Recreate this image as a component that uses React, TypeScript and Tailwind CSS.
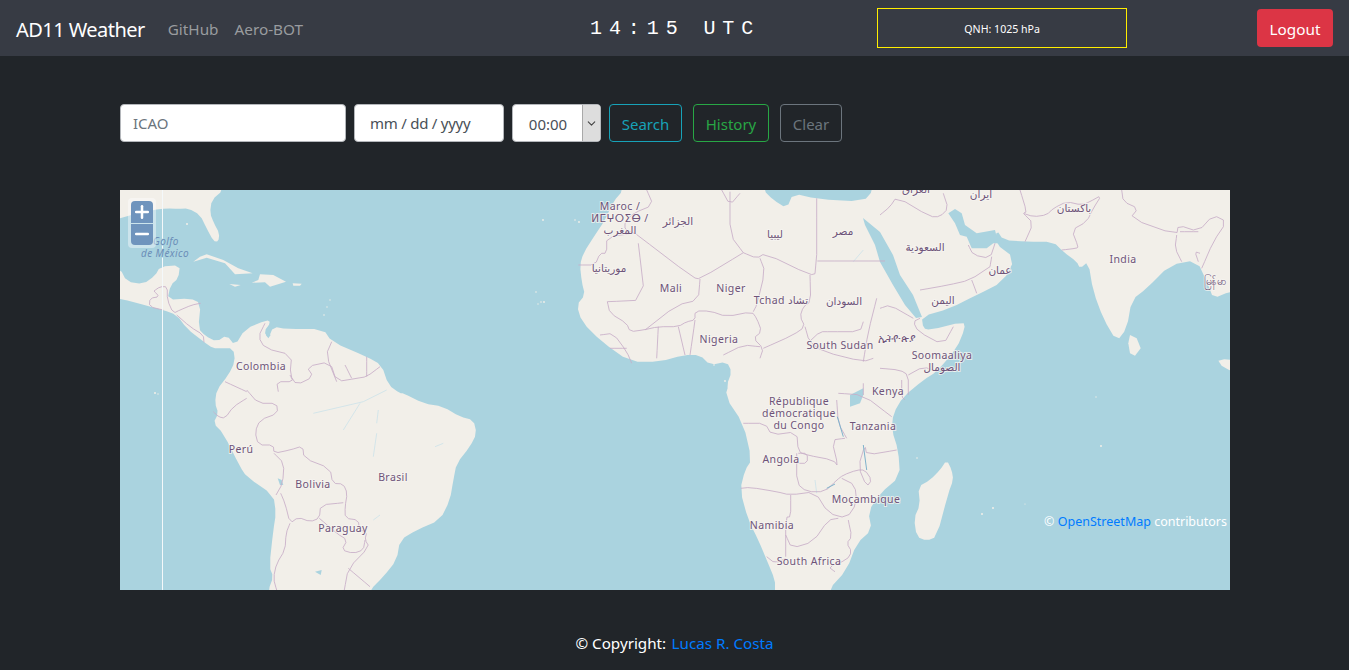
import { ChevronDown, Plus, Minus } from "lucide-react";

const Z = (ox: number, oy: number, s: string) =>
  s.trim().split(/\s+/).map((p) => {
    const [x, y] = p.split(",").map(Number);
    return `${(ox + x / 3).toFixed(1)},${(oy + y / 3).toFixed(1)}`;
  }).join(" ");
const z4 = (s: string) => Z(110, 185, s);
const z5 = (s: string) => Z(110, 390, s);
const z6 = (s: string) => Z(530, 185, s);
const z7 = (s: string) => Z(880, 185, s);
const z8 = (s: string) => Z(700, 380, s);

// rounds the corners of a hand-traced outline so coasts and borders read as curves
const smooth = (s: string, closed: boolean) => {
  const p = s.trim().split(/\s+/).map((q) => q.split(",").map(Number));
  const out: string[] = [];
  if (!closed) out.push(p[0].join(","));
  const n = p.length;
  for (let i = 0; i < (closed ? n : n - 1); i++) {
    const a = p[i];
    const b = p[(i + 1) % n];
    out.push(`${(a[0] * 0.75 + b[0] * 0.25).toFixed(1)},${(a[1] * 0.75 + b[1] * 0.25).toFixed(1)}`);
    out.push(`${(a[0] * 0.25 + b[0] * 0.75).toFixed(1)},${(a[1] * 0.25 + b[1] * 0.75).toFixed(1)}`);
  }
  if (!closed) out.push(p[n - 1].join(","));
  return out.join(" ");
};

const continents = [
  z4("-60,-60 340,-60 340,15 305,45 300,85 312,115 328,145 325,170 310,168 290,130 270,90 235,70 205,72 170,70 130,75 60,90 -60,130"),
  z4("-60,235 30,250 50,290 100,297 135,272 150,245 210,240 205,280 182,300 172,345 240,340 272,355 265,430 285,452 320,470 350,450 375,482 405,432 470,405 482,412 462,440 475,460 490,425 530,432 640,432 665,470 770,515 815,540 835,600 870,625") + " " +
    z5("880,10 940,40 1000,50 1050,80 1090,90 1100,130 1080,170 1040,220 1030,270 1020,330 990,390 920,420 870,450 860,510 820,560 780,600 740,690 475,690 475,600 490,560 478,530 490,420 498,370 490,315 410,260 390,230 340,130 310,100 325,70 315,40 320,0") + " " +
    z4("355,570 375,530 370,490 330,490 310,490 280,470 230,430 200,390 160,375 120,365 30,340 -60,330"),
  z6("280,-60 700,-60 700,15 730,45 770,70 790,25 860,42 1000,50 1030,15 1030,-60") + " " +
    z7("1150,-60 1150,300 1050,320 1000,340 985,300 950,225 870,240 800,310 755,345 740,430 710,470 670,400 640,320 625,230 600,250 590,230 550,200 520,170 440,170 370,165 350,135 345,175 405,220 370,290 290,330 210,370 125,395 130,430 150,435 250,410 255,430 230,490 170,560") + " " +
    z8("670,0 610,50 580,100 575,150 595,210 600,290 540,340 505,395 515,450 470,490 440,570 385,630 385,700 225,700 225,630 225,600 200,540 175,480 145,420 120,330 135,270 155,240 130,130 75,50 90,0") + " " +
    z6("600,630 590,600 605,560 590,530 540,540 510,510 460,510 390,530 300,530 215,470 155,410 140,360 165,330 155,290 150,240 160,205 195,150 225,105 250,50 280,15"),
  z8("740,240 755,270 760,300 745,340 710,470 680,482 650,470 642,415 660,375 655,320 690,300 720,270"),
  z7("1010,520 1100,530 1100,570 1030,550"),
].map((s) => smooth(s, true));

const smallLand = [
  z4("250,230 270,215 290,208 340,225 385,250 428,265 375,268 345,235 290,218"),
  z4("425,293 445,285 450,268 490,270 528,290 480,305 465,292"),
  z4("358,297 392,300 375,305"),
  z4("548,295 575,296 570,302 550,302"),
  z7("750,450 770,460 782,490 765,512 750,505 745,475"),
];

const water = [
  "863,218 880,232 893,255 900,275 913,295 922,317 916,318 905,305 893,285 880,262 875,245 865,225",
  z7("205,85 225,72 245,85 255,120 290,145 345,135 355,175 340,175 320,190 275,190 260,155 240,150 225,115"),
  z8("450,45 490,25 490,45 480,70 450,80"),
  z4("470,440 482,450 475,460 468,450"),
  z5("503,265 515,270 520,285 510,285"),
  z5("615,545 635,540 632,555"),
];

const islands: [number, number, number][] = [
  [187, 224, 1], [324, 315, 0.8], [327, 307, 0.7], [330, 300, 0.7], [544, 302, 0.9], [538, 304, 0.7], [543, 220, 0.9], [579, 222, 0.9], [575, 220, 0.8],
  [536, 292, 0.8], [541, 302, 0.8], [982, 514, 1], [993, 508, 1], [1025, 504, 0.6], [917, 458, 0.8], [1096, 397, 0.7], [1101, 446, 1],
  [155, 393, 1], [158, 394, 0.7], [725, 381, 0.9], [714, 365, 0.8],
];

const borders = [
  ...[
    "132,318 148,335 120,340 118,365 160,375", "132,318 150,305 172,305 172,345 190,385 210,375 245,360 272,355",
    "200,390 240,425 280,450 282,472", "465,415 445,455 465,490 545,510 540,570 560,600 610,575 590,545 660,530 680,590 740,580 770,575 810,545",
    "665,470 648,510 680,590", "705,540 725,580", "770,515 770,575", "345,590 410,620", "540,570 550,590 500,590 505,620",
  ].map(z4),
  ...[
    "410,0 445,40 500,40 503,70 450,90 435,125 445,165 490,165 492,190 540,180 578,168 582,205 660,235 668,280 700,282 712,310 705,350 706,385 745,390 748,420 770,425 765,450 778,470 715,535 703,600",
    "310,65 325,80 345,85 370,50 410,25", "492,190 522,220 518,280 498,315", "512,310 525,340 540,400 565,382 600,395 628,385 632,345 700,338",
    "628,385 680,430 712,450 695,480 730,490 760,480 765,450", "540,400 528,430 525,480 500,520 490,565 500,600", "715,535 780,590",
  ].map(z5),
  ...[
    "315,145 490,278 510,282 640,203", "325,175 345,345 232,350", "315,145 230,155 230,205 210,205 195,240 145,240",
    "510,282 505,345 440,360 345,435", "232,350 240,385 290,415 300,440 340,435 385,425 445,425 470,410 495,405 495,378 540,378 590,395 665,380 680,400 695,440 670,460 700,490 690,520",
    "640,203 680,220 705,205 840,270 860,265 860,40", "690,220 705,260 680,360 670,380", "840,270 842,350 820,365 810,395 825,425 790,450 700,490",
    "862,228 1065,228", "600,20 600,150 640,203", "575,15 600,60 630,25", "350,15 370,60 310,85 285,110 285,135 315,145",
    "825,425 838,470 880,500 1000,530 1030,520", "1000,410 990,440 900,440 870,440 838,470", "495,405 480,510", "445,425 465,510", "385,425 380,520",
    "210,450 250,445 290,500 305,535", "240,490 290,490", "580,510 640,480 690,485", "1040,340 1015,440 1000,530",
  ].map(z6),
  ...[
    "0,90 30,65 50,35 150,95 180,95 205,70 190,25", "345,175 330,220 280,210 265,180", "330,245 335,215", "120,315 205,300 270,285 330,245", "275,285 290,325",
    "420,15 440,80 430,85 460,95 500,90 520,70 560,50 605,60 630,50 665,30 640,70 620,110 575,135 595,185 590,190 545,195", "430,85 460,115 435,170",
    "725,15 730,50 775,70 750,100 890,150 895,120 955,140 1000,90 1040,110 1000,170 965,250", "890,150 885,190 905,230", "955,140 900,140", "960,205 945,200 955,230",
    "120,400 100,410 115,440 190,480 220,425", "0,370 30,360 100,400", "0,550 60,555 85,570 85,630", "85,570 130,545 170,560",
  ].map(z7),
  ...[
    "130,130 195,130 215,165 290,155 295,215 320,225 400,240 415,260 395,180 435,175", "290,220 290,310 320,335 375,335 410,300 430,285 470,270 495,270 515,300 500,320 475,260 495,195 500,225 590,210",
    "122,325 150,322 230,335 270,345 345,335 385,400 440,415 470,370 465,315 425,295", "272,345 272,410 257,412 257,530", "257,465 275,505 340,485 385,420 415,415",
    "445,420 455,470 440,490 455,515 440,540 385,560 405,575", "200,530 225,550 258,535", "415,40 490,45 575,110", "605,0 605,50 615,60", "410,60 415,130 440,175", "490,10 490,45",
    "295,220 322,220 322,250 290,250",
  ].map(z8),
].map((s) => smooth(s, false));

const rivers = [
  z5("610,70 760,35 830,0"), z5("700,120 750,40"), z5("800,100 805,60"), z5("790,390 810,375"), z6("1000,195 970,230"), z5("800,130 790,200"), z5("975,170 1000,160"), z8("350,340 345,300"),
];
const blueLines = [z8("412,110 430,170"), z8("490,195 500,270"), z8("380,325 405,312")];

const labels: [string, number, number][] = [
  ["Maroc /", 620, 210], ["ⵍⵎⵖⵔⵉⴱ /", 620, 222], ["المغرب", 620, 234], ["الجزائر", 678, 225], ["ليبيا", 775, 238], ["مصر", 843, 235],
  ["موريتانيا", 609, 272], ["Mali", 671, 292], ["Niger", 731, 292], ["Tchad تشاد", 781, 304], ["السودان", 844, 305], ["Nigeria", 719, 343],
  ["South Sudan", 840, 349], ["ኢትዮጵያ", 897, 342], ["Soomaaliya", 942, 359], ["الصومال", 942, 371], ["Kenya", 888, 395],
  ["République", 799, 405], ["démocratique", 799, 417], ["du Congo", 799, 429], ["Tanzania", 873, 430], ["Angola", 781, 463], ["Moçambique", 866, 503],
  ["Namibia", 772, 529], ["South Africa", 809, 565], ["Colombia", 261, 370], ["Perú", 241, 453], ["Bolivia", 313, 488], ["Brasil", 393, 481], ["Paraguay", 343, 532],
  ["السعودية", 925, 251], ["عمان", 1000, 274], ["اليمن", 943, 304], ["ایران", 981, 198], ["باکستان", 1074, 212], ["العراق", 916, 193], ["India", 1123, 263], ["မြန်မာ", 1215, 285],
];

function WorldMap() {
  return (
    <svg viewBox="120 190 1110 400" width="1110" height="400" className="block">
      <rect x="120" y="190" width="1110" height="400" fill="#aad3df" />
      {continents.map((p, i) => <polygon key={i} points={p} fill="#f2efe9" />)}
      {smallLand.map((p, i) => <polygon key={i} points={p} fill="#f2efe9" />)}
      {water.map((p, i) => <polygon key={i} points={p} fill="#aad3df" />)}
      {islands.map(([x, y, r], i) => <circle key={i} cx={x} cy={y} r={r} fill="#f2efe9" />)}
      {rivers.map((p, i) => <polyline key={i} points={p} fill="none" stroke="#cbe2ea" strokeWidth="0.8" />)}
      {borders.map((p, i) => <polyline key={i} points={p} fill="none" stroke="#c7aec8" strokeWidth="0.85" />)}
      {blueLines.map((p, i) => <polyline key={i} points={p} fill="none" stroke="#7fb2cc" strokeWidth="1" />)}
      <line x1="162.5" y1="190" x2="162.5" y2="590" stroke="#f4f8fa" strokeWidth="1" />
      <g fontFamily="'Noto Sans','DejaVu Sans',sans-serif" fontSize="10.5" textAnchor="middle" letterSpacing="0.4">
        {labels.map(([t, x, y]) => (
          <text key={t} x={x} y={y} fill="#6e5379" stroke="#f7f5f1" strokeWidth="2" strokeOpacity="0.75" paintOrder="stroke">{t}</text>
        ))}
        <text x="166" y="245" fill="#6b8eb8" fontStyle="italic" stroke="#aad3df" strokeWidth="1" paintOrder="stroke" fontSize="10">Golfo</text>
        <text x="165" y="257" fill="#6b8eb8" fontStyle="italic" stroke="#aad3df" strokeWidth="1" paintOrder="stroke" fontSize="10">de México</text>
      </g>
    </svg>
  );
}

export default function App() {
  return (
    <div className="min-h-[670px] bg-[#212529] text-white font-['Noto_Sans',sans-serif]">
      <nav className="flex h-14 items-center bg-[#373b44] pl-4 pr-4">
        <span className="pt-[3px] text-[20px] leading-[30px] tracking-[-0.55px] text-white">AD11 Weather</span>
        <a className="ml-[23px] pt-[2px] text-[15.3px] text-[#999b9f]">GitHub</a>
        <a className="ml-4 pt-[2px] text-[15.3px] text-[#999b9f]">Aero-BOT</a>
        <span className="ml-[287px] pt-[2px] font-['Liberation_Mono',monospace] text-[20px] tracking-[6.9px] text-white">14:15 UTC</span>
        <div className="ml-[117px] flex h-10 w-[250px] items-center justify-center border border-[#ffee00] pt-[3px] text-[10.6px] text-white">QNH: 1025 hPa</div>
        <button className="ml-auto h-[38px] w-[76px] rounded bg-[#dc3545] pt-[2px] text-[15.3px] text-white">Logout</button>
      </nav>

      <main className="px-[120px] pt-12">
        <form className="flex h-[38px]">
          <input readOnly placeholder="ICAO" className="h-[38px] w-[226px] rounded border border-[#b4b7bb] bg-white px-3 text-[15px] text-[#495057] placeholder:text-[#6c757d]" />
          <input readOnly value="mm / dd / yyyy" className="ml-2 h-[38px] w-[150px] rounded border border-[#b4b7bb] bg-white pl-[15px] pr-2 text-[15px] tracking-[-0.25px] text-[#495057]" />
          <div className="ml-2 flex h-[38px] w-[89px] items-stretch overflow-hidden rounded border border-[#b4b7bb] bg-white">
            <span className="flex flex-1 items-center justify-center pl-px pt-[2px] text-[15px] text-[#495057]">00:00</span>
            <span className="flex w-[18px] items-center justify-center border-l border-[#a9a9a9] bg-[#dddddd]">
              <ChevronDown size={13} className="text-[#444]" />
            </span>
          </div>
          <button type="button" className="ml-2 h-[38px] w-[73px] rounded border border-[#17a2b8] pt-[2px] text-[15px] text-[#17a2b8]">Search</button>
          <button type="button" className="ml-[11px] h-[38px] w-[76px] rounded border border-[#28a745] pt-[2px] text-[15px] text-[#28a745]">History</button>
          <button type="button" className="ml-[11px] h-[38px] w-[62px] rounded border border-[#6c757d] pt-[2px] text-[15px] text-[#6c757d]">Clear</button>
        </form>

        <div className="relative mt-12 h-[400px] w-[1110px] overflow-hidden">
          <WorldMap />
          <div className="absolute left-2 top-2 flex h-[50px] w-[28px] flex-col rounded bg-white/40 p-[3px]">
            <span className="flex h-[22px] items-center justify-center rounded-t bg-[#6f94bd] text-white">
              <Plus size={20} strokeWidth={3} />
            </span>
            <span className="mt-px flex h-[22px] items-center justify-center rounded-b bg-[#6f94bd] text-white">
              <Minus size={20} strokeWidth={3} />
            </span>
          </div>
          <div className="absolute bottom-[58px] right-[3px] text-[12.5px] text-white">
            © <a className="text-[#007bff]">OpenStreetMap</a> contributors
          </div>
        </div>
      </main>

      <footer className="pt-[42px] text-center text-[15.2px] text-white">
        © Copyright: <a className="ml-[1.5px] text-[#007bff]">Lucas R. Costa</a>
      </footer>
    </div>
  );
}
